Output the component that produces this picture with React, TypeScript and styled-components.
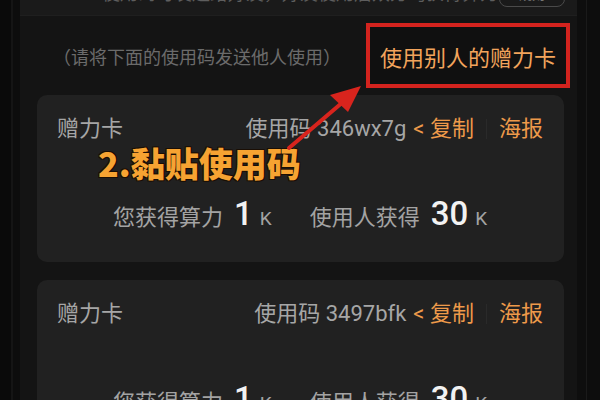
import styled, { createGlobalStyle } from 'styled-components';

const GlobalStyle = createGlobalStyle`
  html, body {
    margin: 0;
    padding: 0;
    background: #0c0c0c;
  }
  body {
    font-family: Roboto, "Noto Sans CJK SC", sans-serif;
  }
`;

const cards = [
  { code: '346wx7g', mine: '1', theirs: '30' },
  { code: '3497bfk', mine: '1', theirs: '30' },
];

export default function App() {
  return (
    <>
      <GlobalStyle />
      <Frame>
        <SideStrip $side='left' />
        <Panel>
          <Header>
            <HeaderText>使用码可发送给好友，好友使用后双方均获得算力</HeaderText>
            <HeaderButton>规则</HeaderButton>
          </Header>
          <TopRow>
            <Hint>（请将下面的使用码发送他人使用）</Hint>
            <HighlightBox>
              <LinkText>使用别人的赠力卡</LinkText>
            </HighlightBox>
          </TopRow>
          <CardList>
            {cards.map((card, i) => (
              <Card key={card.code}>
                <CardHead>
                  <Title>赠力卡</Title>
                  <Actions>
                    <Code>使用码 {card.code}</Code>
                    <Copy>&lt; 复制</Copy>
                    <Divider />
                    <Poster>海报</Poster>
                  </Actions>
                </CardHead>
                <Stats>
                  <StatLabel>您获得算力</StatLabel>
                  <StatNum>{card.mine}</StatNum>
                  <StatUnit>K</StatUnit>
                  <StatLabel $gap>使用人获得</StatLabel>
                  <StatNum>{card.theirs}</StatNum>
                  <StatUnit>K</StatUnit>
                </Stats>
                {i === 0 && <Callout>2.黏贴使用码</Callout>}
              </Card>
            ))}
          </CardList>
        </Panel>
        <SideStrip $side='right' />
        <ArrowLayer viewBox='0 0 600 400' width='600' height='400'>
          <line x1='289' y1='148' x2='350' y2='96' stroke='#d8241d' strokeWidth='4' strokeLinecap='round' />
          <polygon points='361,86 330,95 348,112' fill='#d8241d' />
        </ArrowLayer>
      </Frame>
    </>
  );
}

const Frame = styled.div`
  position: relative;
  width: 600px;
  height: 400px;
  overflow: hidden;
  display: flex;
  background: #0c0c0c;
`;

const SideStrip = styled.div<{ $side: 'left' | 'right' }>`
  width: ${(p) => (p.$side === 'left' ? '20px' : '23px')};
  flex-shrink: 0;
  background: ${(p) =>
    p.$side === 'left'
      ? 'linear-gradient(90deg, #0a0a0a 0 11px, #151515 11px 13px, #0d0d0d 13px)'
      : 'linear-gradient(90deg, #0e0e0e 0 9px, #1a1a1a 9px 10px, #0d0d0d 10px)'};
`;

const Panel = styled.div`
  flex: 1;
  min-width: 0;
  display: flex;
  flex-direction: column;
  background: #141414;
`;

const Header = styled.div`
  height: 15px;
  flex-shrink: 0;
  display: flex;
  justify-content: space-between;
  align-items: flex-start;
  overflow: hidden;
  background: #1a1a1a;
  border-bottom: 1px solid #1f1f1f;
`;

const HeaderText = styled.span`
  min-width: 0;
  overflow: hidden;
  margin: -17px 0 0 82px;
  font-size: 18px;
  line-height: 22px;
  color: #5e5e5e;
  white-space: nowrap;
`;

const HeaderButton = styled.span`
  flex-shrink: 0;
  width: 66px;
  height: 24px;
  margin: -17px 12px 0 0;
  box-sizing: border-box;
  border: 1px solid #4a4a4a;
  border-radius: 8px;
  font-size: 13px;
  line-height: 22px;
  text-align: center;
  color: #777;
`;

const TopRow = styled.div`
  display: flex;
  justify-content: space-between;
  align-items: center;
  margin: 7px 7px 0 33px;
`;

const Hint = styled.span`
  font-size: 18px;
  color: #6b6b6b;
  white-space: nowrap;
`;

const HighlightBox = styled.div`
  flex-shrink: 0;
  width: 204px;
  height: 65px;
  box-sizing: border-box;
  border: 4px solid #d3231e;
  display: flex;
  align-items: center;
  justify-content: center;
  background: #101010;
`;

const LinkText = styled.span`
  font-size: 22px;
  color: #f2a45c;
  white-space: nowrap;
`;

const CardList = styled.div`
  display: flex;
  flex-direction: column;
  gap: 18px;
  margin: 7px 13px 0 17px;
`;

const Card = styled.div`
  position: relative;
  flex-shrink: 0;
  height: 167px;
  box-sizing: border-box;
  padding: 21px 21px 0 20px;
  background: #212121;
  border-radius: 10px;
`;

const CardHead = styled.div`
  display: flex;
  justify-content: space-between;
  align-items: center;
  height: 26px;
  font-size: 22px;
  line-height: 26px;
`;

const Title = styled.span`
  color: #a6a6a6;
`;

const Actions = styled.div`
  display: flex;
  align-items: center;
  white-space: nowrap;
`;

const Code = styled.span`
  color: #a6a6a6;
`;

const Copy = styled.span`
  margin-left: 7px;
  color: #ee9a4a;
`;

const Divider = styled.span`
  width: 1px;
  height: 20px;
  margin: 0 12px;
  background: #2a2a2a;
`;

const Poster = styled.span`
  color: #ee9a4a;
`;

const Stats = styled.div`
  display: flex;
  justify-content: center;
  align-items: baseline;
  margin-top: 52px;
  height: 40px;
  line-height: 40px;
  white-space: nowrap;
`;

const StatLabel = styled.span<{ $gap?: boolean }>`
  margin-left: ${(p) => (p.$gap ? '38px' : '0')};
  font-size: 22px;
  color: #a3a3a3;
`;

const StatNum = styled.span`
  margin-left: 11px;
  font-size: 33px;
  font-weight: 500;
  color: #f2f2f2;
`;

const StatUnit = styled.span`
  margin-left: 7px;
  font-size: 19px;
  color: #a3a3a3;
`;

const Callout = styled.span`
  position: absolute;
  left: 61px;
  top: 50px;
  font-family: "Noto Sans CJK SC", sans-serif;
  font-size: 34px;
  font-weight: 900;
  line-height: 36px;
  color: #f6a332;
  white-space: nowrap;
  text-shadow: 1px 1px 0 #1a0e04, -1px -1px 0 #1a0e04, 1px -1px 0 #1a0e04, -1px 1px 0 #1a0e04;
`;

const ArrowLayer = styled.svg`
  position: absolute;
  left: 0;
  top: 0;
  pointer-events: none;
`;
